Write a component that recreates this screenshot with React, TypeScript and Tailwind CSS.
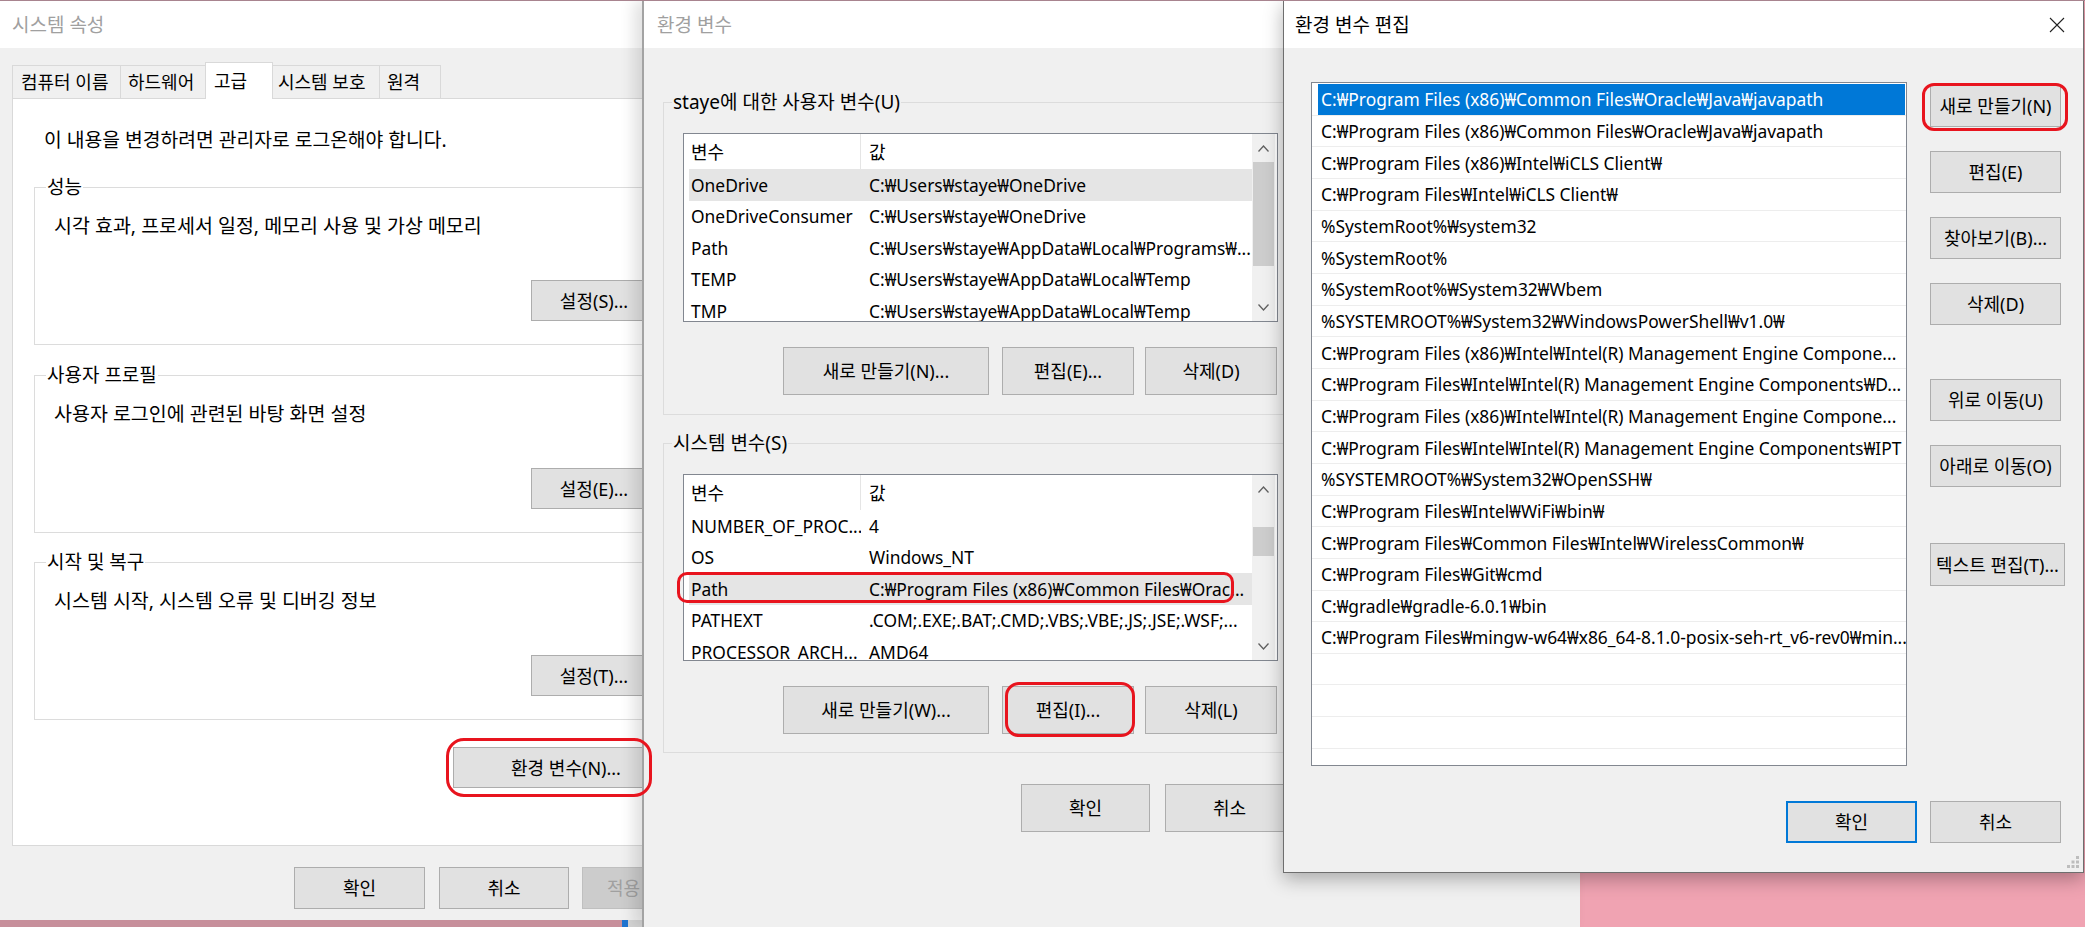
import React from "react";

const W = "\u20A9";

function Btn({ className = "", children }: { className?: string; children: React.ReactNode }) {
  return (
    <div
      className={`flex shrink-0 items-center justify-center whitespace-nowrap border border-[#adadad] bg-[#e1e1e1] text-[18px] text-black ${className}`}
    >
      {children}
    </div>
  );
}

function GroupBox({
  label,
  legendClass,
  className,
  children,
}: {
  label: string;
  legendClass: string;
  className: string;
  children: React.ReactNode;
}) {
  return (
    <div className={`flex shrink-0 flex-col border border-[#dcdcdc] ${className}`}>
      <div className={`-mt-[14px] w-fit whitespace-nowrap px-[1px] leading-[26px] ${legendClass}`}>{label}</div>
      {children}
    </div>
  );
}

function Chevron({ down = false }: { down?: boolean }) {
  return (
    <svg width="11" height="7" viewBox="0 0 11 7">
      <path
        d={down ? "M0.5 0.5 L5.5 6 L10.5 0.5" : "M0.5 6.5 L5.5 1 L10.5 6.5"}
        fill="none"
        stroke="#606060"
        strokeWidth="1.3"
      />
    </svg>
  );
}

function ScrollBar({ thumbClass }: { thumbClass: string }) {
  return (
    <div className="mr-[2px] flex h-full w-[23px] shrink-0 flex-col bg-[#f0f0f0]">
      <div className="flex h-[28px] shrink-0 items-center justify-center">
        <Chevron />
      </div>
      <div className={`mx-[1px] shrink-0 bg-[#cdcdcd] ${thumbClass}`} />
      <div className="flex-1" />
      <div className="flex h-[28px] shrink-0 items-center justify-center">
        <Chevron down />
      </div>
    </div>
  );
}

type VarRow = { name: string; value: string; selected?: boolean };

function VarList({ rows, className, thumbClass }: { rows: VarRow[]; className: string; thumbClass: string }) {
  return (
    <div className={`flex shrink-0 overflow-hidden border border-[#828790] bg-white ${className}`}>
      <div className="flex min-w-0 flex-1 flex-col overflow-hidden">
        <div className="flex h-[35px] shrink-0 items-center text-[18px]">
          <div className="flex h-full w-[177px] shrink-0 items-center border-r border-[#e5e5e5] pl-[7px]">변수</div>
          <div className="pl-[8px]">값</div>
        </div>
        {rows.map((r, i) => (
          <div
            key={i}
            className={`ml-[5px] flex h-[31.5px] shrink-0 items-center whitespace-nowrap text-[17.4px] ${r.selected ? "bg-[#e5e5e5]" : ""}`}
          >
            <div className="w-[172px] shrink-0 overflow-hidden pl-[2px]">{r.name}</div>
            <div className="pl-[8px]">{r.value}</div>
          </div>
        ))}
      </div>
      <ScrollBar thumbClass={thumbClass} />
    </div>
  );
}

const userVars: VarRow[] = [
  { name: "OneDrive", value: `C:${W}Users${W}staye${W}OneDrive`, selected: true },
  { name: "OneDriveConsumer", value: `C:${W}Users${W}staye${W}OneDrive` },
  { name: "Path", value: `C:${W}Users${W}staye${W}AppData${W}Local${W}Programs${W}...` },
  { name: "TEMP", value: `C:${W}Users${W}staye${W}AppData${W}Local${W}Temp` },
  { name: "TMP", value: `C:${W}Users${W}staye${W}AppData${W}Local${W}Temp` },
];

const sysVars: VarRow[] = [
  { name: "NUMBER_OF_PROC...", value: "4" },
  { name: "OS", value: "Windows_NT" },
  { name: "Path", value: `C:${W}Program Files (x86)${W}Common Files${W}Orac...`, selected: true },
  { name: "PATHEXT", value: ".COM;.EXE;.BAT;.CMD;.VBS;.VBE;.JS;.JSE;.WSF;..." },
  { name: "PROCESSOR_ARCH...", value: "AMD64" },
];

const pathItems = [
  `C:${W}Program Files (x86)${W}Common Files${W}Oracle${W}Java${W}javapath`,
  `C:${W}Program Files (x86)${W}Common Files${W}Oracle${W}Java${W}javapath`,
  `C:${W}Program Files (x86)${W}Intel${W}iCLS Client${W}`,
  `C:${W}Program Files${W}Intel${W}iCLS Client${W}`,
  `%SystemRoot%${W}system32`,
  `%SystemRoot%`,
  `%SystemRoot%${W}System32${W}Wbem`,
  `%SYSTEMROOT%${W}System32${W}WindowsPowerShell${W}v1.0${W}`,
  `C:${W}Program Files (x86)${W}Intel${W}Intel(R) Management Engine Compone...`,
  `C:${W}Program Files${W}Intel${W}Intel(R) Management Engine Components${W}D...`,
  `C:${W}Program Files (x86)${W}Intel${W}Intel(R) Management Engine Compone...`,
  `C:${W}Program Files${W}Intel${W}Intel(R) Management Engine Components${W}IPT`,
  `%SYSTEMROOT%${W}System32${W}OpenSSH${W}`,
  `C:${W}Program Files${W}Intel${W}WiFi${W}bin${W}`,
  `C:${W}Program Files${W}Common Files${W}Intel${W}WirelessCommon${W}`,
  `C:${W}Program Files${W}Git${W}cmd`,
  `C:${W}gradle${W}gradle-6.0.1${W}bin`,
  `C:${W}Program Files${W}mingw-w64${W}x86_64-8.1.0-posix-seh-rt_v6-rev0${W}min...`,
  "",
  "",
  "",
  "",
];

function SystemProperties() {
  return (
    <div className="absolute left-0 top-[1px] flex h-[919px] w-[724px] flex-col bg-[#f0f0f0]">
      <div className="flex h-[47px] shrink-0 items-center bg-white pl-[12px] text-[#a0a0a0]">시스템 속성</div>

      {/* tabs */}
      <div className="relative z-10 ml-[12px] mt-[14px] flex h-[36px] shrink-0 items-end text-[18px]">
        <div className="flex h-[33px] w-[109px] items-center border border-b-0 border-[#d9d9d9] bg-[#f0f0f0] pl-[8px]">
          컴퓨터 이름
        </div>
        <div className="-ml-px flex h-[33px] w-[86px] items-center border border-b-0 border-[#d9d9d9] bg-[#f0f0f0] pl-[7px]">
          하드웨어
        </div>
        <div className="-mb-px -ml-px flex h-[37px] w-[68px] items-center border border-b-0 border-[#d9d9d9] bg-white pl-[8px]">
          고급
        </div>
        <div className="-ml-px flex h-[33px] w-[108px] items-center border border-b-0 border-[#d9d9d9] bg-[#f0f0f0] pl-[5px]">
          시스템 보호
        </div>
        <div className="-ml-px flex h-[33px] w-[62px] items-center border border-b-0 border-[#d9d9d9] bg-[#f0f0f0] pl-[7px]">
          원격
        </div>
      </div>

      {/* tab page */}
      <div className="mx-[12px] flex h-[748px] shrink-0 flex-col border border-[#d9d9d9] bg-white">
        <div className="mt-[28px] pl-[31px] text-[19.3px]">이 내용을 변경하려면 관리자로 로그온해야 합니다.</div>

        <GroupBox label="성능" legendClass="ml-[11px] bg-white" className="mx-[21px] mt-[34px] h-[158px]">
          <div className="mt-[13px] pl-[19px] text-[19.5px]">시각 효과, 프로세서 일정, 메모리 사용 및 가상 메모리</div>
          <Btn className="ml-[496px] mt-[41px] h-[41px] w-[126px]">설정(S)...</Btn>
        </GroupBox>

        <GroupBox label="사용자 프로필" legendClass="ml-[11px] bg-white" className="mx-[21px] mt-[30px] h-[158px]">
          <div className="mt-[13px] pl-[19px] text-[19.5px]">사용자 로그인에 관련된 바탕 화면 설정</div>
          <Btn className="ml-[496px] mt-[41px] h-[41px] w-[126px]">설정(E)...</Btn>
        </GroupBox>

        <GroupBox label="시작 및 복구" legendClass="ml-[11px] bg-white" className="mx-[21px] mt-[29px] h-[158px]">
          <div className="mt-[13px] pl-[19px] text-[19.5px]">시스템 시작, 시스템 오류 및 디버깅 정보</div>
          <Btn className="ml-[496px] mt-[41px] h-[41px] w-[126px]">설정(T)...</Btn>
        </GroupBox>

        <Btn className="ml-[440px] mt-[27px] h-[41px] w-[226px]">환경 변수(N)...</Btn>
      </div>

      <div className="ml-[294px] mt-[21px] flex">
        <Btn className="h-[42px] w-[131px]">확인</Btn>
        <Btn className="ml-[14px] h-[42px] w-[130px]">취소</Btn>
        <div className="ml-[13px] flex h-[42px] w-[131px] items-center border border-[#bfbfbf] bg-[#cccccc] pl-[24px] text-[18px] text-[#a0a0a0]">
          적용
        </div>
      </div>
    </div>
  );
}

function EnvironmentVariables() {
  return (
    <div className="absolute left-[642px] top-[1px] flex h-[926px] w-[938px] flex-col border-l-2 border-[#a3a3a3] bg-[#f0f0f0] shadow-[-8px_0_14px_rgba(0,0,0,0.12)]">
      <div className="flex h-[47px] shrink-0 items-center bg-white pl-[13px] text-[#a0a0a0]">환경 변수</div>

      <GroupBox
        label="staye에 대한 사용자 변수(U)"
        legendClass="ml-[8px] bg-[#f0f0f0]"
        className="ml-[19px] mt-[54px] h-[313px] w-[627px]"
      >
        <VarList rows={userVars} className="ml-[19px] mt-[18px] h-[189px] w-[595px]" thumbClass="h-[104px]" />
        <div className="ml-[119px] mt-[25px] flex">
          <Btn className="h-[48px] w-[206px]">새로 만들기(N)...</Btn>
          <Btn className="ml-[13px] h-[48px] w-[132px]">편집(E)...</Btn>
          <Btn className="ml-[11px] h-[48px] w-[132px]">삭제(D)</Btn>
        </div>
      </GroupBox>

      <GroupBox label="시스템 변수(S)" legendClass="ml-[8px] bg-[#f0f0f0]" className="ml-[19px] mt-[28px] h-[310px] w-[627px]">
        <VarList
          rows={sysVars}
          className="ml-[19px] mt-[18px] h-[187px] w-[595px]"
          thumbClass="mt-[24px] h-[29px]"
        />
        <div className="ml-[119px] mt-[25px] flex">
          <Btn className="h-[48px] w-[206px]">새로 만들기(W)...</Btn>
          <Btn className="ml-[13px] h-[48px] w-[132px]">편집(I)...</Btn>
          <Btn className="ml-[11px] h-[48px] w-[132px]">삭제(L)</Btn>
        </div>
      </GroupBox>

      <div className="ml-[377px] mt-[31px] flex">
        <Btn className="h-[48px] w-[129px]">확인</Btn>
        <Btn className="ml-[15px] h-[48px] w-[129px]">취소</Btn>
      </div>
    </div>
  );
}

function EditEnvironmentVariable() {
  return (
    <div className="absolute left-[1283px] top-0 flex h-[873px] w-[801px] flex-col border border-[#6e6e6e] bg-[#f0f0f0] shadow-[0_6px_18px_rgba(0,0,0,0.3)]">
      <div className="flex h-[47px] shrink-0 items-center bg-white pl-[11px] text-black">
        환경 변수 편집
        <svg className="ml-auto mr-[18px]" width="16" height="16" viewBox="0 0 16 16">
          <path d="M1 1 L15 15 M15 1 L1 15" stroke="#222" strokeWidth="1.1" />
        </svg>
      </div>

      <div className="flex shrink-0">
        <div className="ml-[27px] mt-[34px] flex h-[684px] w-[596px] shrink-0 flex-col overflow-hidden border border-[#828790] bg-white pt-[1px] text-[17.4px]">
          {pathItems.map((p, i) => (
            <div key={i} className="flex h-[31.67px] shrink-0 items-stretch whitespace-nowrap border-b border-[#ededed]">
              {i === 0 ? (
                <div className="ml-[6px] mr-[1px] flex flex-1 items-center bg-[#0078d7] pl-[3px] text-white">{p}</div>
              ) : (
                <div className="flex items-center pl-[9px]">{p}</div>
              )}
            </div>
          ))}
        </div>

        <div className="ml-[23px] mt-[37px] flex flex-col">
          <Btn className="h-[42px] w-[131px]">새로 만들기(N)</Btn>
          <Btn className="mt-[24px] h-[42px] w-[131px]">편집(E)</Btn>
          <Btn className="mt-[24px] h-[42px] w-[131px]">찾아보기(B)...</Btn>
          <Btn className="mt-[24px] h-[42px] w-[131px]">삭제(D)</Btn>
          <Btn className="mt-[54px] h-[42px] w-[131px]">위로 이동(U)</Btn>
          <Btn className="mt-[24px] h-[42px] w-[131px]">아래로 이동(O)</Btn>
          <Btn className="mt-[56px] h-[43px] w-[135px]">텍스트 편집(T)...</Btn>
        </div>
      </div>

      <div className="mt-[35px] flex justify-end pr-[22px]">
        <div className="flex h-[42px] w-[131px] items-center justify-center border-2 border-[#0078d7] bg-[#e1e1e1] text-[18px]">
          확인
        </div>
        <Btn className="ml-[13px] h-[42px] w-[131px]">취소</Btn>
      </div>

      <svg className="absolute bottom-[4px] right-[4px]" width="12" height="12" viewBox="0 0 12 12">
        <rect x="9" y="0" width="3" height="3" fill="#bdbdbd" />
        <rect x="4.5" y="4.5" width="3" height="3" fill="#bdbdbd" />
        <rect x="9" y="4.5" width="3" height="3" fill="#bdbdbd" />
        <rect x="0" y="9" width="3" height="3" fill="#bdbdbd" />
        <rect x="4.5" y="9" width="3" height="3" fill="#bdbdbd" />
        <rect x="9" y="9" width="3" height="3" fill="#bdbdbd" />
      </svg>
    </div>
  );
}

export default function App() {
  return (
    <div className="relative h-[927px] w-[2085px] overflow-hidden bg-[#f0a3b2] font-['Noto_Sans','Noto_Sans_CJK_KR',sans-serif] text-[19px] leading-[26px] text-black">
      {/* strip of the window underneath */}
      <div className="absolute left-0 top-[920px] flex h-[7px] w-[642px]">
        <div className="w-[622px] bg-[#c78f9b]" />
        <div className="w-[6px] bg-[#1e74d0]" />
        <div className="flex-1 bg-[#d4d4d4]" />
      </div>

      <SystemProperties />
      <EnvironmentVariables />
      <EditEnvironmentVariable />

      <div className="absolute left-0 top-0 h-[1px] w-full bg-[#a8848f]" />

      {/* red hand-drawn marks */}
      <div className="absolute left-[446px] top-[738px] h-[59px] w-[206px] rounded-[18px] border-[3px] border-[#e8141e]" />
      <div className="absolute left-[677px] top-[572px] h-[31px] w-[557px] rounded-[10px] border-[3px] border-[#e8141e]" />
      <div className="absolute left-[1005px] top-[682px] h-[55px] w-[130px] rounded-[14px] border-[3px] border-[#e8141e]" />
      <div className="absolute left-[1922px] top-[83px] h-[48px] w-[146px] rounded-[12px] border-[3px] border-[#e8141e]" />
    </div>
  );
}
